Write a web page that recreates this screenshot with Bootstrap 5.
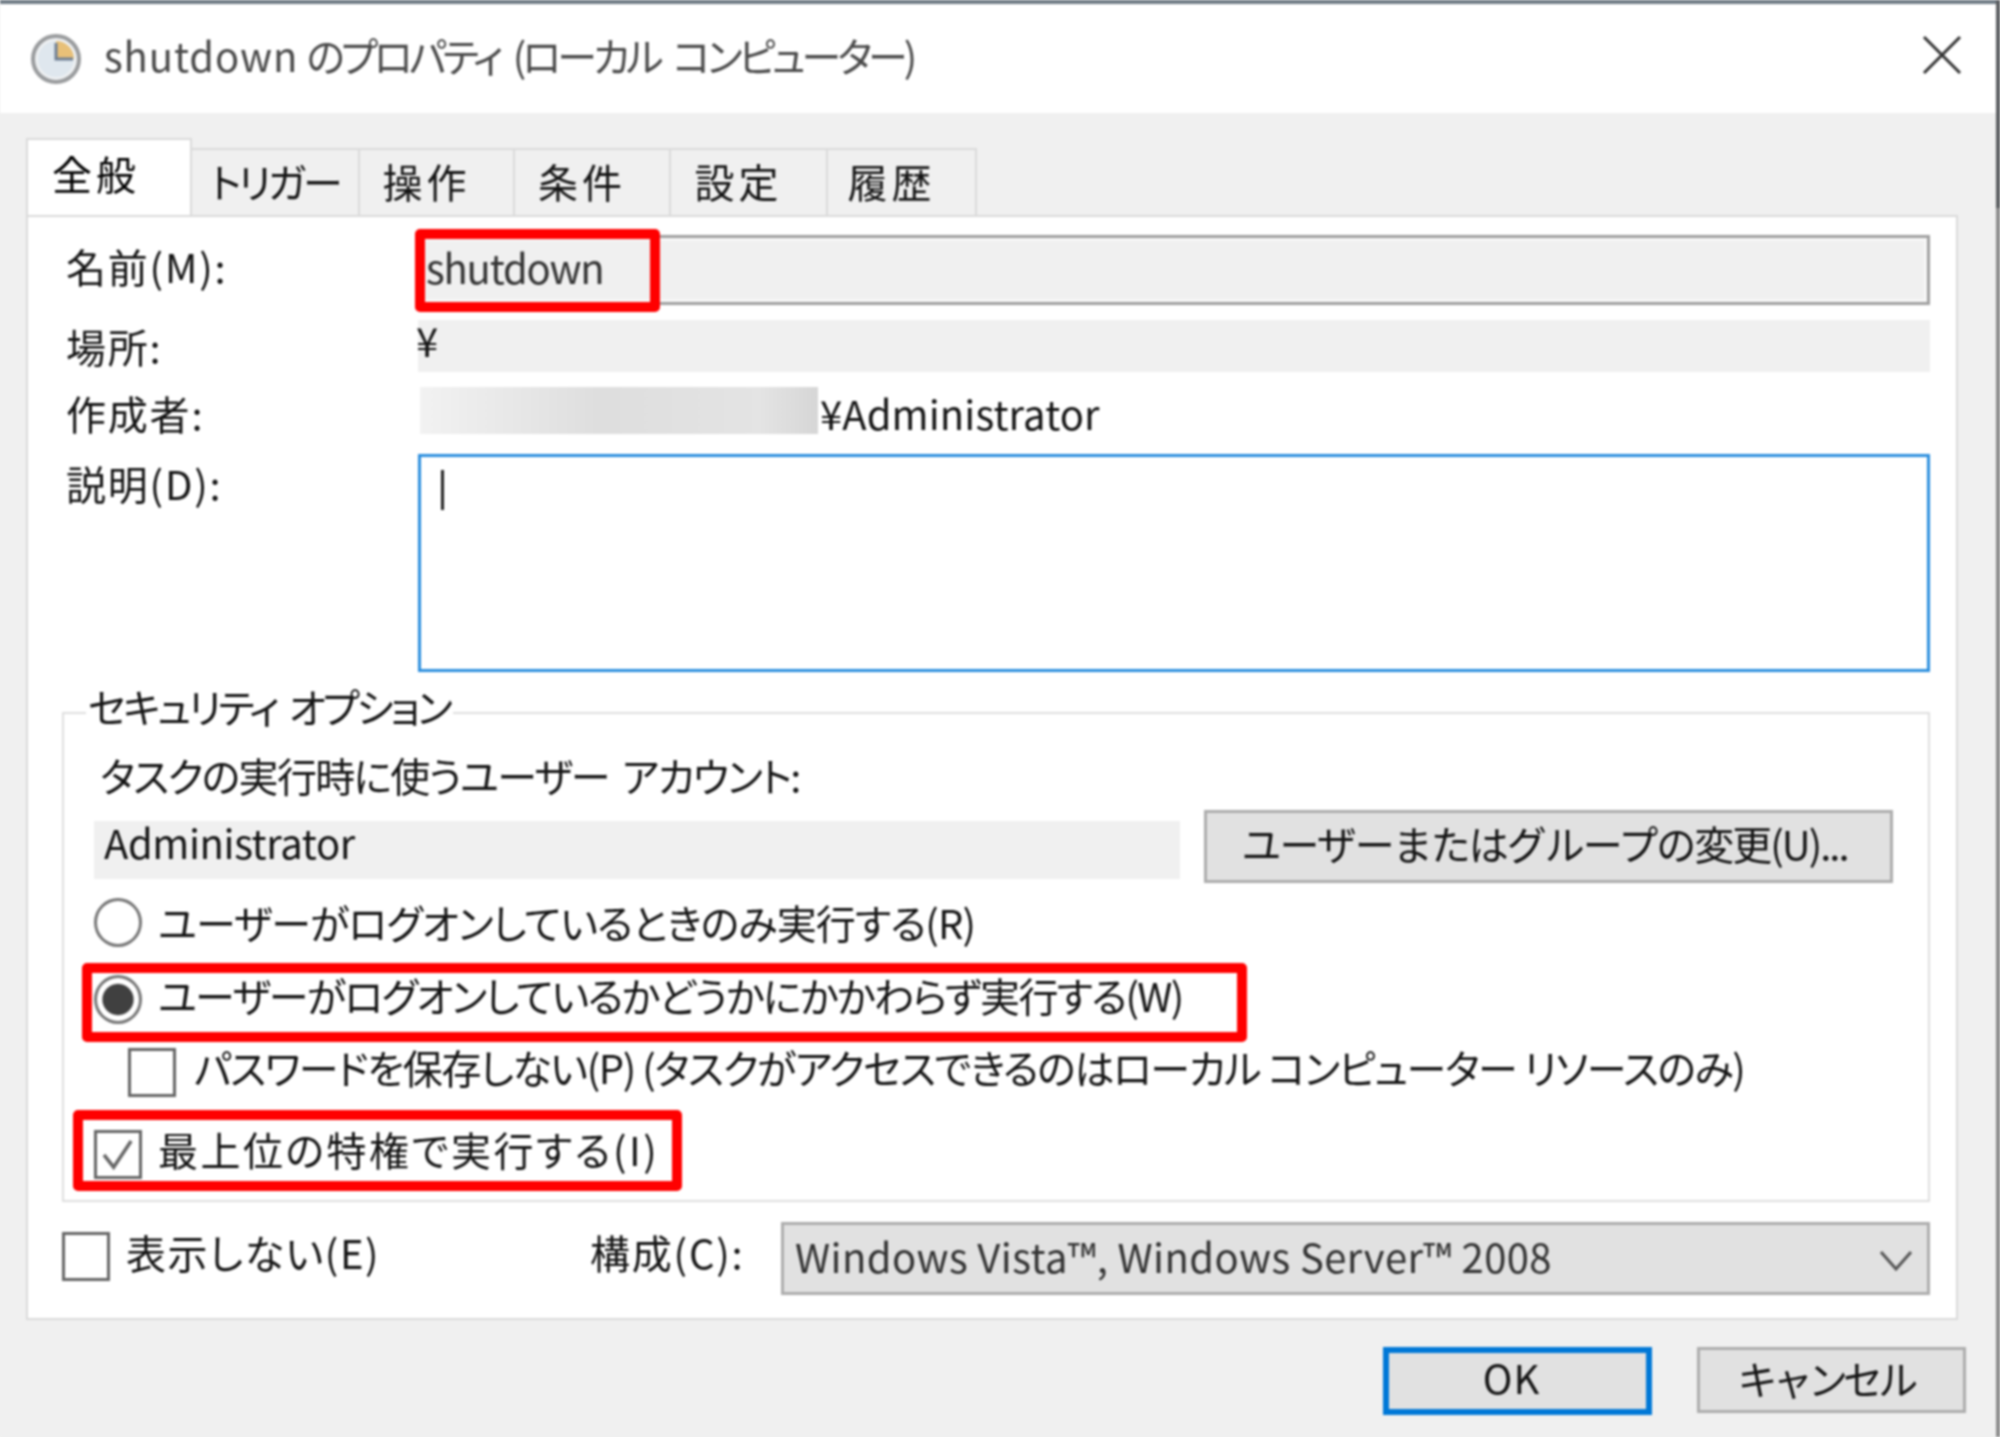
<!DOCTYPE html>
<html lang="ja">
<head>
    <meta charset="UTF-8">
    <title>shutdown のプロパティ</title>
    <link href="https://cdn.jsdelivr.net/npm/bootstrap@5.3.3/dist/css/bootstrap.min.css" rel="stylesheet">
    <style>
        html, body { margin: 0; background: #f0f0f0; }
        body { width: 2000px; height: 1437px; overflow: hidden; }
        /* whole dialog is an upscaled capture, so everything is a little soft */
        .dlg {
            position: relative; width: 2000px; height: 1437px; background: #f0f0f0; color: #141414;
            font-family: "Noto Sans CJK JP", "Liberation Sans", sans-serif;
            font-size: 40px; line-height: 48px; font-feature-settings: "palt";
            filter: blur(.8px); white-space: nowrap;
        }
        /* edge of the window behind, cut off by the capture */
        .dlg::after { content: ""; position: absolute; top: 0; right: 0; bottom: 0; width: 4px; background: linear-gradient(180deg, #5a5d60 0, #5a5d60 208px, #8c8c8c 208px, #8c8c8c 100%); }
        .titlebar { height: 113px; background: #fff; border-top: 4px solid #6f7b85; padding-left: 31px; }
        .title-text { margin-left: 23px; margin-bottom: 8px; color: #4a4a4a; letter-spacing: -3.9px; word-spacing: 8px; }
        .title-lat { letter-spacing: .9px; margin-right: 8px; }
        .close-x { margin-left: auto; margin-right: 38px; margin-bottom: 8px; }

        .tabstrip { margin-top: 27px; padding-left: 26px; height: 75px; border: 0; flex-wrap: nowrap; }
        .tabstrip .nav-link {
            height: 67px; margin: 8px 0 0; padding: 0 20px 4px 0; border-radius: 0; background: #f0f0f0; color: #141414;
            border: 2px solid #dadada; border-left: 0; border-bottom: 0; line-height: 62px; text-align: center;
            letter-spacing: 4px;
        }
        .tabstrip .nav-link.active { height: 77px; margin: -2px 0 0; width: 166px; padding-right: 26px; background: #fff; border: 2px solid #dadada; border-bottom: 0; line-height: 66px; position: relative; z-index: 2; }
        .tabstrip .tab-trg { width: 168px; padding-right: 0; letter-spacing: -3px; }
        .tab-w155 { width: 155px; } .tab-w156 { width: 156px; } .tab-w157 { width: 157px; } .tab-w149 { width: 149px; }

        .panel-main { margin: 0 42px 0 26px; height: 1105px; background: #fff; border: 2px solid #dadada; padding: 18px 26px 0 34px; }
        .frow { display: flex; align-items: center; }
        .flabel { width: 356px; flex: none; padding-left: 4px; letter-spacing: 1.8px; }
        .h-name { height: 70px; }
        .h-name .flabel { padding-bottom: 8px; }
        .h-loc { height: 52px; margin-top: 15px; }
        .h-auth { height: 47px; margin-top: 15px; }
        .h-auth .flabel { padding-top: 4px; }
        .h-desc { height: 218px; margin-top: 20px; align-items: flex-start; }
        .h-desc .flabel { padding-top: 5px; }

        .name-field { flex: 1; height: 70px; border: 3px solid #a0a0a0; background: #f0f0f0; border-radius: 0; padding: 0 0 0 5px; font-size: 40px; line-height: 58px; color: #333; position: relative; letter-spacing: -1.2px; box-shadow: inset 0 0 0 3px #f7f7f7; }
        .loc-field { flex: 1; height: 52px; background: #f0f0f0; line-height: 40px; text-indent: -2px; }
        .auth-blur { width: 398px; height: 47px; margin-left: 2px; background: linear-gradient(90deg, #f2f2f2, #dedede 45%, #e4e4e4 85%, #d6d6d6); }
        .auth-name { letter-spacing: .1px; margin-left: 2px; padding-top: 4px; }
        .desc-field { flex: 1; height: 218px; border: 3px solid #2b8ede; border-radius: 0; padding: 0; background: #fff; position: relative; }
        .caret-bar { position: absolute; left: 20px; top: 13px; width: 3px; height: 40px; background: #222; }

        .grp-box { position: relative; margin-top: 40px; height: 490px; border: 2px solid #dedede; padding: 36px 35px 0 30px; }
        .grp-legend { position: absolute; left: 22px; top: -32px; background: #fff; padding: 0 3px 0 2px; letter-spacing: -3px; word-spacing: 6px; }
        .task-line { height: 50px; line-height: 50px; padding-left: 6px; letter-spacing: -1.7px; word-spacing: 6px; }
        .user-row { height: 73px; margin-top: 10px; gap: 24px; }
        .user-band { flex: 1; height: 58px; background: #f0f0f0; padding-left: 10px; line-height: 42px; align-self: flex-start; margin-top: 11px; letter-spacing: -.4px; }
        .win-btn { background: #e1e1e1; border: 3px solid #adadad; border-radius: 0; padding: 0; color: #141414; font-size: 40px; line-height: 1; letter-spacing: -2px; }
        .btn-change { width: 689px; height: 73px; padding: 0 8px 8px 0; }
        .btn-ok { width: 269px; height: 68px; border: 6px solid #0078d7; padding: 0 12px 8px 0; letter-spacing: 1px; }
        .btn-cancel { width: 269px; height: 66px; padding: 0 12px 4px 0; letter-spacing: -4.8px; }
        .win-btn:hover { background: #e1e1e1; border-color: #adadad; color: #141414; }

        .opt-row { position: relative; display: flex; align-items: center; height: 49px; margin-bottom: 0; }
        .opt-row .form-check-input { width: 48px; height: 49px; margin: 0 16px 0 0; flex: none; background-color: #fff; border: 3px solid #666; border-radius: 0; box-shadow: none; }
        .opt-row .form-check-input[type=radio] { border-radius: 50%; border-color: #777; }
        .opt-row .form-check-input:checked[type=radio] { background-image: radial-gradient(circle, #404040 0, #404040 50%, #fff 54%); background-size: 100% 100%; border-color: #777; }
        .opt-row .form-check-input:checked[type=checkbox] { background-image: url("data:image/svg+xml,%3csvg xmlns='http://www.w3.org/2000/svg' viewBox='0 0 48 49'%3e%3cpath d='M8 25l11 14L39 9' fill='none' stroke='%23666' stroke-width='4'/%3e%3c/svg%3e"); background-size: 100% 100%; border-color: #666; }
        .m-r1 { margin-top: 15px; } .m-r2 { margin-top: 28px; } .m-pw { margin-top: 24px; margin-left: 34px; } .m-top { margin-top: 33px; }
        .t-r1 { letter-spacing: -.85px; padding-bottom: 2px; }
        .t-r2 { letter-spacing: -1.65px; padding-bottom: 10px; }
        .t-pw { letter-spacing: -1.4px; padding-bottom: 12px; margin-left: 2px; }
        .t-top { letter-spacing: 2.5px; padding-bottom: 12px; }
        .t-hide { letter-spacing: 1.6px; padding-bottom: 10px; }

        .red-mark { position: absolute; border: 10px solid #f00; border-radius: 5px; pointer-events: none; }
        .red-name { left: -6px; top: -9px; width: 245px; height: 83px; }
        .red-r2 { left: -12px; top: -12px; width: 1165px; height: 79px; }
        .red-top { left: -21px; top: -20px; width: 609px; height: 81px; }

        .last-row { height: 73px; margin-top: 20px; }
        .last-row .opt-row { width: 528px; flex: none; margin-top: -4px; }
        .cfg-label { width: 191px; flex: none; letter-spacing: 1.8px; padding-bottom: 14px; }
        .cfg-select { flex: 1; height: 73px; background: #e1e1e1; border: 3px solid #adadad; border-radius: 0; padding: 0 0 0 11px; line-height: 63px; position: relative; letter-spacing: .4px; color: #333; background-image: none; font-size: 40px; }
        .chev { position: absolute; right: 14px; top: 25px; }
        .dlg-footer { margin-top: 27px; padding-right: 34px; gap: 45px; }
    </style>
</head>
<body>
<div class="dlg">
    <div class="titlebar d-flex align-items-center">
        <svg width="50" height="50" viewBox="0 0 50 50">
            <circle cx="25" cy="25" r="23" fill="#eef0f2" stroke="#9a9c9e" stroke-width="4"/>
            <circle cx="25" cy="25" r="18" fill="#dfe7ee"/>
            <path d="M25 25V7a18 18 0 0 1 18 18z" fill="#e8c078"/>
            <path d="M25 9v16h17" fill="none" stroke="#6f7f93" stroke-width="3"/>
        </svg>
        <span class="title-text"><span class="title-lat">shutdown</span>のプロパティ (ローカル コンピューター)</span>
        <svg class="close-x" width="40" height="40" viewBox="0 0 40 40"><path d="M2 2l36 36M38 2L2 38" stroke="#333" stroke-width="3" fill="none"/></svg>
    </div>

    <ul class="nav nav-tabs tabstrip">
        <li class="nav-item"><a class="nav-link active" href="#">全般</a></li>
        <li class="nav-item"><a class="nav-link tab-trg" href="#">トリガー</a></li>
        <li class="nav-item"><a class="nav-link tab-w155" href="#">操作</a></li>
        <li class="nav-item"><a class="nav-link tab-w156" href="#">条件</a></li>
        <li class="nav-item"><a class="nav-link tab-w157" href="#">設定</a></li>
        <li class="nav-item"><a class="nav-link tab-w149" href="#">履歴</a></li>
    </ul>

    <div class="panel-main">
        <div class="frow h-name">
            <div class="flabel">名前(M):</div>
            <div class="name-field form-control">shutdown<span class="red-mark red-name"></span></div>
        </div>
        <div class="frow h-loc">
            <div class="flabel">場所:</div>
            <div class="loc-field">¥</div>
        </div>
        <div class="frow h-auth">
            <div class="flabel">作成者:</div>
            <div class="auth-blur"></div>
            <div class="auth-name">¥Administrator</div>
        </div>
        <div class="frow h-desc">
            <div class="flabel">説明(D):</div>
            <div class="desc-field form-control"><span class="caret-bar"></span></div>
        </div>

        <div class="grp-box">
            <span class="grp-legend">セキュリティ オプション</span>
            <div class="task-line">タスクの実行時に使うユーザー アカウント:</div>
            <div class="d-flex user-row">
                <div class="user-band">Administrator</div>
                <button type="button" class="btn win-btn btn-change">ユーザーまたはグループの変更(U)...</button>
            </div>
            <label class="opt-row m-r1">
                <input class="form-check-input" type="radio" name="logon">
                <span class="t-r1">ユーザーがログオンしているときのみ実行する(R)</span>
            </label>
            <label class="opt-row m-r2">
                <input class="form-check-input" type="radio" name="logon" checked>
                <span class="t-r2">ユーザーがログオンしているかどうかにかかわらず実行する(W)</span>
                <span class="red-mark red-r2"></span>
            </label>
            <label class="opt-row m-pw">
                <input class="form-check-input" type="checkbox">
                <span class="t-pw">パスワードを保存しない(P) (タスクがアクセスできるのはローカル コンピューター リソースのみ)</span>
            </label>
            <label class="opt-row m-top">
                <input class="form-check-input" type="checkbox" checked>
                <span class="t-top">最上位の特権で実行する(I)</span>
                <span class="red-mark red-top"></span>
            </label>
        </div>

        <div class="d-flex align-items-center last-row">
            <label class="opt-row">
                <input class="form-check-input" type="checkbox">
                <span class="t-hide">表示しない(E)</span>
            </label>
            <div class="cfg-label">構成(C):</div>
            <div class="cfg-select form-select">Windows Vista™, Windows Server™ 2008
                <svg class="chev" width="34" height="22" viewBox="0 0 34 22"><path d="M2 2l15 17L32 2" fill="none" stroke="#555" stroke-width="3"/></svg>
            </div>
        </div>
    </div>

    <div class="d-flex justify-content-end align-items-start dlg-footer">
        <button type="button" class="btn win-btn btn-ok">OK</button>
        <button type="button" class="btn win-btn btn-cancel">キャンセル</button>
    </div>
</div>
<script src="https://cdn.jsdelivr.net/npm/bootstrap@5.3.3/dist/js/bootstrap.bundle.min.js"></script>
</body>
</html>
